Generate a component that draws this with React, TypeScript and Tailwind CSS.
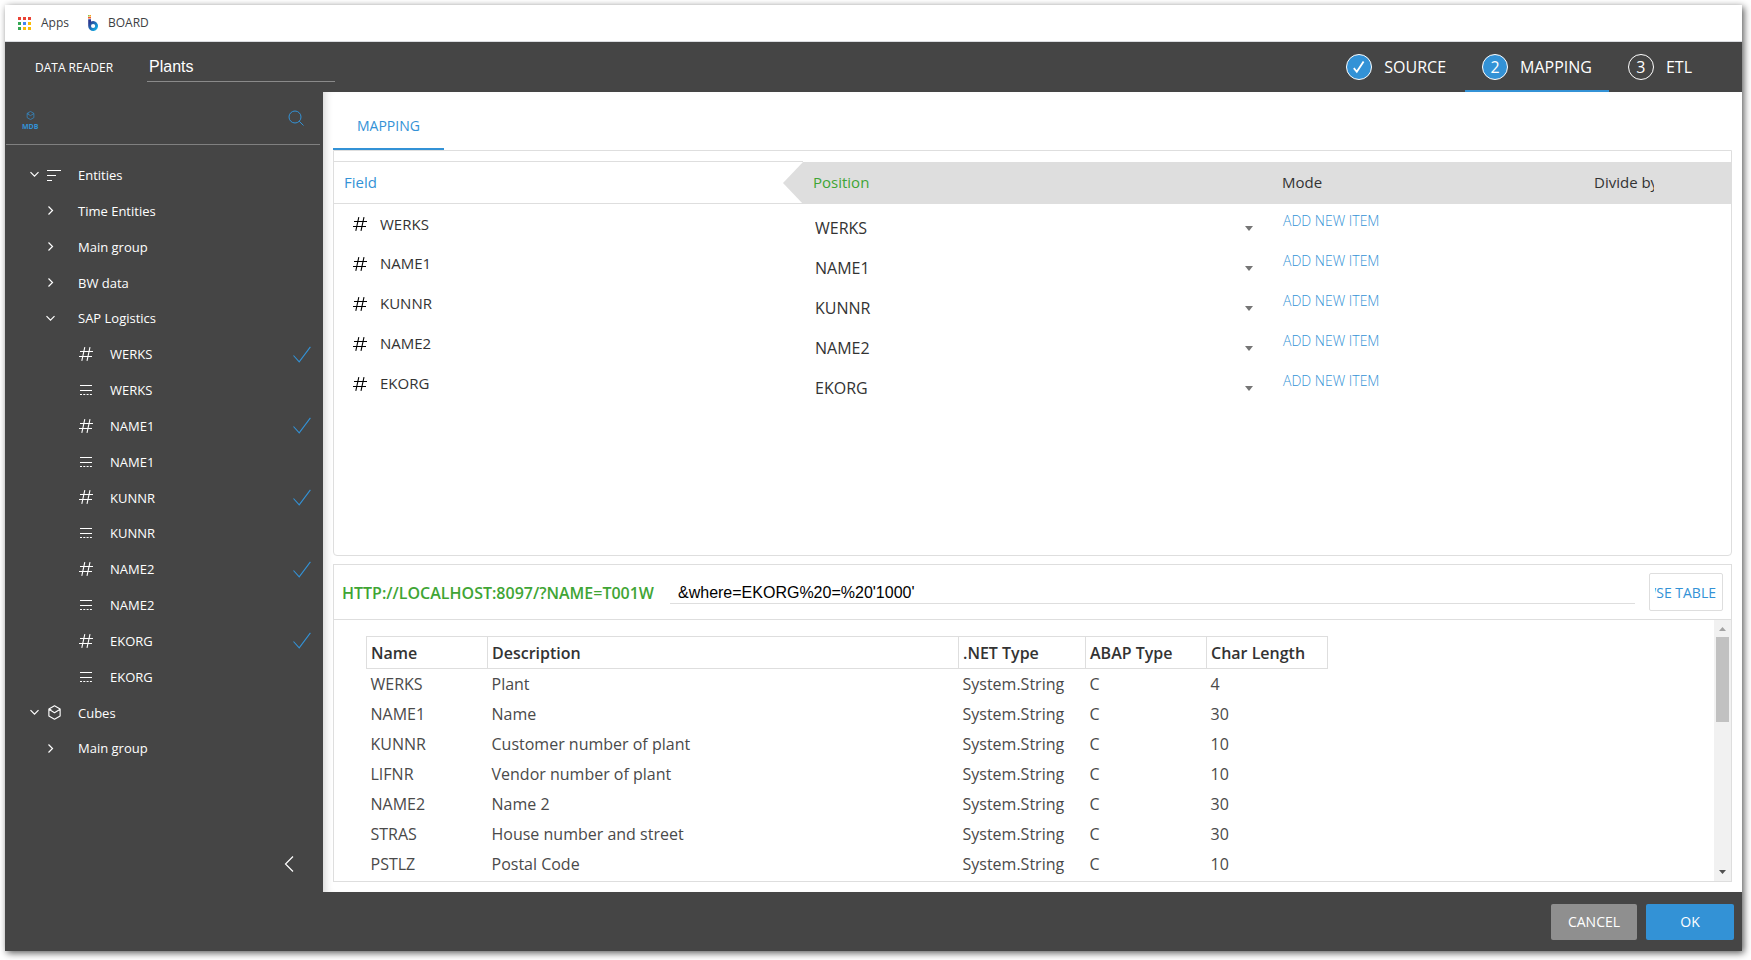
import { useState } from "react";
import type { ReactNode } from "react";

type IconProps = { className?: string };

function HashIcon({ className = "" }: IconProps) {
  return (
    <svg className={className} width="14" height="14" viewBox="0 0 14 14" fill="none" stroke="currentColor" strokeWidth="1.1" aria-hidden="true">
      <path d="M5.8 0.2 2.8 13.8M11 0.2 8 13.8M1 4.5H14M0 9.5H13" />
    </svg>
  );
}

function TextLinesIcon({ className = "" }: IconProps) {
  return (
    <svg className={className} width="14" height="14" viewBox="0 0 14 14" fill="none" stroke="currentColor" aria-hidden="true">
      <path d="M1 2.5H13M1 7.5H13" />
      <path d="M1 11.5H13" strokeDasharray="2 1.3" />
    </svg>
  );
}

function EntitiesIcon() {
  return (
    <svg width="14" height="14" viewBox="0 0 14 14" fill="none" stroke="currentColor" aria-hidden="true">
      <path d="M0 2.5H14M0 7.5H9M0 12.5H5" />
    </svg>
  );
}

function CubeIcon({ size = 15 }: { size?: number }) {
  return (
    <svg width={size} height={size} viewBox="0 0 16 16" fill="none" stroke="currentColor" strokeWidth="1.2" strokeLinejoin="round" aria-hidden="true">
      <path d="M8 0.8 14 4.2V11.8L8 15.2 2 11.8V4.2ZM2 4.6 8 8.2 14 4.6M4 6V4.2" />
    </svg>
  );
}

function SearchIcon() {
  return (
    <svg width="16" height="16" viewBox="0 0 16 16" fill="none" stroke="currentColor" aria-hidden="true">
      <circle cx="7" cy="7" r="6" />
      <path d="M11.2 11.2 15.5 15.5" />
    </svg>
  );
}

function ChevronDown() {
  return (
    <svg width="9" height="9" viewBox="0 0 9 9" fill="none" stroke="currentColor" strokeWidth="1.2" aria-hidden="true">
      <path d="M0.5 2.2 4.5 6.2 8.5 2.2" />
    </svg>
  );
}

function ChevronRight() {
  return (
    <svg width="9" height="9" viewBox="0 0 9 9" fill="none" stroke="currentColor" strokeWidth="1.2" aria-hidden="true">
      <path d="M2.5 0.5 6.5 4.5 2.5 8.5" />
    </svg>
  );
}

function CheckMark() {
  return (
    <svg width="18" height="17" viewBox="0 0 18 17" fill="none" stroke="currentColor" strokeWidth="1.1" aria-label="Mapped" role="img">
      <path d="M0.5 9.5 6.2 15.8 17.4 0.8" />
    </svg>
  );
}

function BoardLogo() {
  return (
    <svg width="12" height="16" viewBox="0 0 12 16" aria-hidden="true">
      <defs>
        <linearGradient id="board-b" x1="0" y1="0" x2="1" y2="1">
          <stop offset="0.2" stopColor="#2b3990" />
          <stop offset="0.9" stopColor="#12b5ea" />
        </linearGradient>
      </defs>
      <path
        d="M1.2 4.2H4V6.6A4.9 4.9 0 1 1 1.2 11ZM6.1 8.9A2.1 2.1 0 1 0 6.1 13.1A2.1 2.1 0 1 0 6.1 8.9Z"
        fill="url(#board-b)"
        fillRule="evenodd"
      />
      <rect x="1" y="0" width="1.5" height="1.5" fill="#8cc63f" />
      <rect x="2.5" y="0" width="1.5" height="1.5" fill="#f7a11a" />
      <rect x="1" y="2" width="3" height="1.5" fill="#f15a29" />
    </svg>
  );
}

const APP_COLORS = ["#ea4335", "#ea4335", "#ea4335", "#34a853", "#4285f4", "#fbbc05", "#34a853", "#fbbc05", "#fbbc05"];

function AppsIcon() {
  return (
    <svg width="13" height="13" viewBox="0 0 13 13" aria-hidden="true">
      {APP_COLORS.map((color, i) => (
        <rect key={i} x={(i % 3) * 5} y={Math.floor(i / 3) * 5} width="3" height="3" fill={color} />
      ))}
    </svg>
  );
}

type Node =
  | { kind: "root"; label: string; icon: ReactNode }
  | { kind: "group"; label: string; open?: boolean }
  | { kind: "code" | "text"; label: string };

const FIELDS = ["WERKS", "NAME1", "KUNNR", "NAME2", "EKORG"];

const TREE: Node[] = [
  { kind: "root", label: "Entities", icon: <EntitiesIcon /> },
  { kind: "group", label: "Time Entities" },
  { kind: "group", label: "Main group" },
  { kind: "group", label: "BW data" },
  { kind: "group", label: "SAP Logistics", open: true },
  ...FIELDS.flatMap((label): Node[] => [
    { kind: "code", label },
    { kind: "text", label },
  ]),
  { kind: "root", label: "Cubes", icon: <CubeIcon /> },
  { kind: "group", label: "Main group" },
];

function TreeRow({ node }: { node: Node }) {
  if (node.kind === "root") {
    return (
      <button type="button" className="flex w-full items-center pl-[25px] text-left">
        <span className="flex w-[17px] shrink-0">
          <ChevronDown />
        </span>
        <span className="flex w-[31px] shrink-0">{node.icon}</span>
        <span className="pt-0.5">{node.label}</span>
      </button>
    );
  }
  if (node.kind === "group") {
    return (
      <button type="button" className="flex w-full items-center pl-[41px] text-left">
        <span className="flex w-8 shrink-0">{node.open ? <ChevronDown /> : <ChevronRight />}</span>
        <span className="pt-0.5">{node.label}</span>
      </button>
    );
  }
  return (
    <button type="button" className="flex w-full items-center pr-3 pl-[74px] text-left">
      <span className="flex w-[31px] shrink-0">{node.kind === "code" ? <HashIcon /> : <TextLinesIcon />}</span>
      <span className="flex-1 pt-0.5">{node.label}</span>
      {node.kind === "code" && (
        <span className="text-[#3392d6]">
          <CheckMark />
        </span>
      )}
    </button>
  );
}

function Step({ mark, label, filled, current }: { mark: ReactNode; label: string; filled?: boolean; current?: boolean }) {
  return (
    <button
      type="button"
      aria-current={current ? "step" : undefined}
      className={`flex items-center gap-3 border-b-2 px-[17px] pt-0.5 text-base text-white ${current ? "border-[#3392d6]" : "border-transparent"}`}
    >
      <span
        className={`flex size-[26px] items-center justify-center rounded-full border border-white ${filled ? "bg-[#3392d6]" : ""}`}
      >
        {mark}
      </span>
      {label}
    </button>
  );
}

const SOURCE_ROWS: [string, string, string][] = [
  ["WERKS", "Plant", "4"],
  ["NAME1", "Name", "30"],
  ["KUNNR", "Customer number of plant", "10"],
  ["LIFNR", "Vendor number of plant", "10"],
  ["NAME2", "Name 2", "30"],
  ["STRAS", "House number and street", "30"],
  ["PSTLZ", "Postal Code", "10"],
];

function MappingTable() {
  return (
    <table className="w-full table-fixed border-collapse text-left">
      <colgroup>
        <col />
        <col />
        <col className="w-[312px]" />
        <col className="w-[147px]" />
      </colgroup>
      <thead className="h-[42px] text-[15px] text-[#333]">
        <tr>
          <th className="border-y border-[#dedede] pl-2.5 font-normal text-[#3392d6]">Field</th>
          <th className="relative bg-[#dedede] pl-2.5 font-normal text-[#3fa535]">
            <svg className="absolute top-0 right-full h-full w-5" viewBox="0 0 20 42" preserveAspectRatio="none" fill="#dedede" aria-hidden="true">
              <path d="M20 0V42L0 21Z" />
            </svg>
            Position
          </th>
          <th className="bg-[#dedede] pl-2.5 font-normal">Mode</th>
          <th className="bg-[#dedede] pl-2.5 font-normal">
            <span className="block w-[60px] overflow-hidden whitespace-nowrap">Divide by</span>
          </th>
        </tr>
      </thead>
      <tbody>
        {FIELDS.map((field) => (
          <tr key={field} className="h-10">
            <td className="pl-[19px] text-[15px] text-[#333]">
              <span className="flex items-center gap-[13px]">
                <HashIcon className="text-black" />
                {field}
              </span>
            </td>
            <td className="pt-2 pr-[19px]">
              <span className="relative flex items-center">
                <select aria-label={`Position of ${field}`} defaultValue={field} className="w-full appearance-none bg-transparent pl-3 text-base text-[#333]">
                  {FIELDS.map((option) => (
                    <option key={option}>{option}</option>
                  ))}
                </select>
                <svg className="pointer-events-none absolute right-0" width="8" height="6" viewBox="0 0 8 6" fill="#757575" aria-hidden="true">
                  <path d="M0 1H8L4 6Z" />
                </svg>
              </span>
            </td>
            <td className="pb-2 pl-[11px]">
              <button type="button" className="text-sm font-light text-[#3392d6]">
                ADD NEW ITEM
              </button>
            </td>
            <td />
          </tr>
        ))}
      </tbody>
    </table>
  );
}

function SourceTable() {
  return (
    <table className="m-4 mb-0 ml-8 h-fit w-[962px] table-fixed border-collapse text-left text-base">
      <colgroup>
        <col className="w-[121px]" />
        <col />
        <col className="w-[127px]" />
        <col className="w-[121px]" />
        <col className="w-[121px]" />
      </colgroup>
      <thead className="h-8 text-[#333]">
        <tr>
          {["Name", "Description", ".NET Type", "ABAP Type", "Char Length"].map((name) => (
            <th key={name} className="border border-[#dedede] pl-1 font-semibold">
              {name}
            </th>
          ))}
        </tr>
      </thead>
      <tbody className="text-[#4a4a4a]">
        {SOURCE_ROWS.map(([name, description, length]) => (
          <tr key={name} className="h-[30px]">
            <td className="pl-1">{name}</td>
            <td className="pl-1">{description}</td>
            <td className="pl-1">System.String</td>
            <td className="pl-1">C</td>
            <td className="pl-1">{length}</td>
          </tr>
        ))}
      </tbody>
    </table>
  );
}

export default function App() {
  const [name, setName] = useState("Plants");
  const [query, setQuery] = useState("&where=EKORG%20=%20'1000'");

  return (
    <div className="flex min-h-screen bg-white pt-[5px] pr-[9px] pb-[9px] pl-[5px] font-['Open_Sans',sans-serif]">
      <div className="flex flex-1 flex-col bg-[#454545] shadow-[2px_2px_7px_rgba(0,0,0,0.65)]">
        <nav aria-label="Bookmarks" className="flex h-[37px] items-center gap-[18px] border-b border-[#dadce0] bg-white px-[13px] text-xs text-[#3c4043]">
          <a href="#apps" className="flex items-center gap-2.5">
            <AppsIcon />
            Apps
          </a>
          <a href="#board" className="flex items-center gap-[9px]">
            <BoardLogo />
            BOARD
          </a>
        </nav>

        <header className="flex h-[50px] pr-[33px] pl-[30px]">
          <label htmlFor="reader-name" className="flex w-28 items-center pt-0.5 text-xs font-medium text-white">
            DATA READER
          </label>
          <input
            id="reader-name"
            value={name}
            onChange={(e) => setName(e.target.value)}
            className="mt-2 h-8 w-[188px] border-b border-[#8a8a8a] bg-transparent px-0.5 pt-0.5 font-['Liberation_Sans',sans-serif] text-base text-white outline-none"
          />
          <nav aria-label="Steps" className="ml-auto flex gap-0.5">
            <Step
              filled
              label="SOURCE"
              mark={
                <svg width="14" height="14" viewBox="0 0 14 14" fill="none" stroke="currentColor" strokeWidth="1.8" aria-hidden="true">
                  <path d="M1.8 8.2 4.8 11.8 11.6 1.4" />
                </svg>
              }
            />
            <Step filled current label="MAPPING" mark="2" />
            <Step label="ETL" mark="3" />
          </nav>
        </header>

        <div className="flex flex-1">
          <aside className="z-10 flex w-[318px] shrink-0 flex-col text-white">
            <div className="mr-[3px] ml-px flex h-[53px] items-center justify-between border-b border-[#808080] pr-4 pl-4 text-[#3392d6]">
              <span className="flex flex-col items-center gap-[3px] pt-1.5">
                <CubeIcon size={9} />
                <span className="text-[7px] leading-[8px] font-bold">MDB</span>
              </span>
              <button type="button" aria-label="Search">
                <SearchIcon />
              </button>
            </div>
            <ul className="mt-3 flex h-[609px] flex-col text-[13px]">
              {TREE.map((node, i) => (
                <li key={i} className="flex flex-1">
                  <TreeRow node={node} />
                </li>
              ))}
            </ul>
            <button type="button" aria-label="Collapse panel" className="mt-auto mr-[29px] mb-5 self-end">
              <svg width="10" height="16" viewBox="0 0 10 16" fill="none" stroke="currentColor" strokeWidth="1.2" aria-hidden="true">
                <path d="M9 0.5 1.5 8 9 15.5" />
              </svg>
            </button>
          </aside>

          <main className="flex min-w-0 flex-1 flex-col bg-white px-2.5 pb-2.5 shadow-[inset_8px_0_8px_-6px_rgba(0,0,0,0.18)]">
            <div role="tablist" className="flex h-[58px]">
              <button type="button" role="tab" aria-selected="true" className="border-b-2 border-[#3392d6] px-6 pt-3 text-sm text-[#3392d6]">
                MAPPING
              </button>
            </div>

            <section className="flex-1 rounded-b-sm border border-[#dedede] pt-2.5">
              <MappingTable />
            </section>

            <section className="mt-2 border border-[#dedede]">
              <div className="flex h-[55px] items-center border-b border-[#dedede] px-2">
                <label htmlFor="query" className="w-[328px] pt-0.5 text-base font-semibold whitespace-nowrap text-[#3fa535]">
                  HTTP://LOCALHOST:8097/?NAME=T001W
                </label>
                <input
                  id="query"
                  value={query}
                  onChange={(e) => setQuery(e.target.value)}
                  className="h-6 min-w-0 flex-1 border-b border-[#dedede] bg-transparent px-2 pt-0.5 font-['Liberation_Sans',sans-serif] text-base text-black outline-none"
                />
                <button type="button" className="ml-3.5 flex h-[38px] w-[74px] rounded-xs border border-[#dedede] pr-1.5 pl-[5px] text-sm text-[#3392d6]">
                  <span className="flex h-full w-full items-center justify-end overflow-hidden pt-0.5 whitespace-nowrap">BROWSE TABLE</span>
                </button>
              </div>
              <div className="flex min-h-[261px]">
                <div className="flex-1">
                  <SourceTable />
                </div>
                <div className="flex w-[17px] flex-col items-center bg-[#f1f1f1]" aria-hidden="true">
                  <svg width="17" height="17" viewBox="0 0 17 17" fill="#a3a3a3">
                    <path d="M5 11H12L8.5 7Z" />
                  </svg>
                  <div className="h-[85px] w-[13px] bg-[#c1c1c1]" />
                  <svg className="mt-auto" width="17" height="17" viewBox="0 0 17 17" fill="#505050">
                    <path d="M5 6H12L8.5 10Z" />
                  </svg>
                </div>
              </div>
            </section>
          </main>
        </div>

        <footer className="flex justify-end gap-[9px] pt-3 pr-2 pb-[11px] text-sm font-medium text-white">
          <button type="button" className="h-9 w-[86px] rounded-xs bg-[#8f8f8f]">
            CANCEL
          </button>
          <button type="button" className="h-9 w-[88px] rounded-xs bg-[#3392d6]">
            OK
          </button>
        </footer>
      </div>
    </div>
  );
}
